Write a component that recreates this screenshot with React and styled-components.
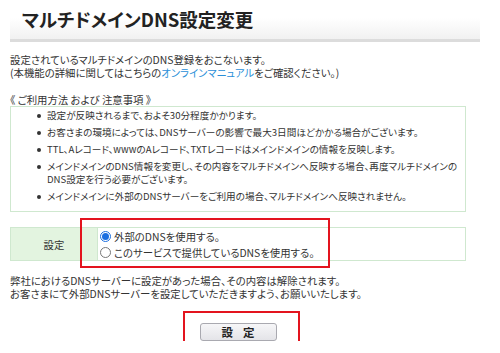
import React from "react";
import styled, { createGlobalStyle } from "styled-components";

const Global = createGlobalStyle`
  html, body { margin: 0; padding: 0; background: #fff; }
  body {
    font-family: "Noto Sans CJK JP", "Noto Sans", sans-serif;
    font-size: 10.4px;
    line-height: 13px;
    color: #333;
    font-feature-settings: "palt";
  }
`;

const Page = styled.div`
  width: 456px;
  padding: 0 10px;
`;

const Header = styled.div`
  width: 470px;
  height: 42px;
  box-sizing: border-box;
  padding: 6px 0 0 12px;
  background: linear-gradient(#ffffff 0%, #ffffff 45%, #f1f1f1 100%);
  border-bottom: 3px solid #dcdcdc;
`;

const Title = styled.h1`
  margin: 0;
  font-size: 18.5px;
  line-height: 26px;
  font-weight: bold;
  color: #222;
`;

const Para = styled.p`
  margin: ${(p) => p.$m || "0"};
  line-height: 13px;
`;

const Link = styled.a`
  color: #2a8fd8;
  text-decoration: none;
`;

const NoticeBox = styled.ul`
  margin: 0;
  list-style: none;
  border: 1px solid #cfe8cf;
  padding: 1px 0 8px 26px;
  font-size: 9.6px;
`;

const Item = styled.li`
  position: relative;
  padding-left: 10px;
  line-height: 13px;
  margin-top: 4px;
  white-space: nowrap;
  &:first-child { margin-top: 1px; }
  &::before {
    content: "";
    position: absolute;
    left: 0;
    top: 5px;
    width: 4px;
    height: 4px;
    border-radius: 50%;
    background: #333;
  }
`;

const SettingTable = styled.div`
  position: relative;
  margin-top: 15px;
  display: grid;
  grid-template-columns: 87px 1fr;
  border: 1px solid #cfe8cf;
  height: 34px;
  box-sizing: border-box;
`;

const HeadCell = styled.div`
  background: #e3f4e0;
  border-right: 1px solid #cfe8cf;
  display: flex;
  align-items: center;
  justify-content: center;
`;

const OptionCell = styled.div`
  display: flex;
  flex-direction: column;
  justify-content: center;
  padding-left: 2px;
  gap: 3px;
`;

const Option = styled.label`
  display: flex;
  align-items: center;
  gap: 3px;
  line-height: 13px;
  height: 13px;
`;

const Radio = styled.span`
  width: 11px;
  height: 11px;
  border-radius: 50%;
  box-sizing: border-box;
  border: 1px solid ${(p) => (p.$on ? "#1b6fe0" : "#777")};
  background: #fff;
  display: flex;
  align-items: center;
  justify-content: center;
  flex: none;
  &::after {
    content: "";
    display: ${(p) => (p.$on ? "block" : "none")};
    width: 7px;
    height: 7px;
    border-radius: 50%;
    background: #1b6fe0;
  }
`;

const Highlight = styled.div`
  position: absolute;
  left: ${(p) => p.$l}px;
  top: ${(p) => p.$t}px;
  width: ${(p) => p.$w}px;
  height: ${(p) => p.$h}px;
  border: 2px solid #e3141e;
  box-sizing: border-box;
  pointer-events: none;
`;

const ButtonRow = styled.div`
  display: flex;
  justify-content: center;
  margin-top: 23px;
`;

const ButtonWrap = styled.div`
  position: relative;
  height: 18px;
`;

const Button = styled.button`
  display: block;
  width: 77px;
  height: 18px;
  padding: 0;
  border: 1px solid #a9a9b0;
  border-radius: 3px;
  background: linear-gradient(#f6f6f8, #e4e4e8);
  font-family: "Noto Sans CJK JP", sans-serif;
  font-size: 11.5px;
  font-weight: bold;
  color: #222;
  letter-spacing: 10px;
  text-indent: 10px;
  line-height: 16px;
`;

export default function App() {
  return (
    <>
      <Global />
      <Page>
        <Header>
          <Title>マルチドメインDNS設定変更</Title>
        </Header>
        <Para $m="11px 0 0">
          設定されているマルチドメインのDNS登録をおこないます。
          <br />
          (本機能の詳細に関してはこちらの<Link href="#">オンラインマニュアル</Link>をご確認ください。)
        </Para>
        <Para $m="14px 0 0">《 ご利用方法 および 注意事項 》</Para>
        <NoticeBox>
          <Item>設定が反映されるまで、およそ30分程度かかります。</Item>
          <Item>お客さまの環境によっては、DNSサーバーの影響で最大3日間ほどかかる場合がございます。</Item>
          <Item>TTL、Aレコード、wwwのAレコード、TXTレコードはメインドメインの情報を反映します。</Item>
          <Item>
            メインドメインのDNS情報を変更し、その内容をマルチドメインへ反映する場合、再度マルチドメインの
            <br />
            DNS設定を行う必要がございます。
          </Item>
          <Item>メインドメインに外部のDNSサーバーをご利用の場合、マルチドメインへ反映されません。</Item>
        </NoticeBox>
        <SettingTable>
          <HeadCell>設定</HeadCell>
          <OptionCell>
            <Option>
              <Radio $on />
              外部のDNSを使用する。
            </Option>
            <Option>
              <Radio />
              このサービスで提供しているDNSを使用する。
            </Option>
          </OptionCell>
          <Highlight $l={69} $t={-10} $w={250} $h={50} />
        </SettingTable>
        <Para $m="13px 0 0">
          弊社におけるDNSサーバーに設定があった場合、その内容は解除されます。
          <br />
          お客さまにて外部DNSサーバーを設定していただきますよう、お願いいたします。
        </Para>
        <ButtonRow>
          <ButtonWrap>
            <Button type="button">設定</Button>
            <Highlight $l={-17} $t={-12} $w={117} $h={37} />
          </ButtonWrap>
        </ButtonRow>
      </Page>
    </>
  );
}
